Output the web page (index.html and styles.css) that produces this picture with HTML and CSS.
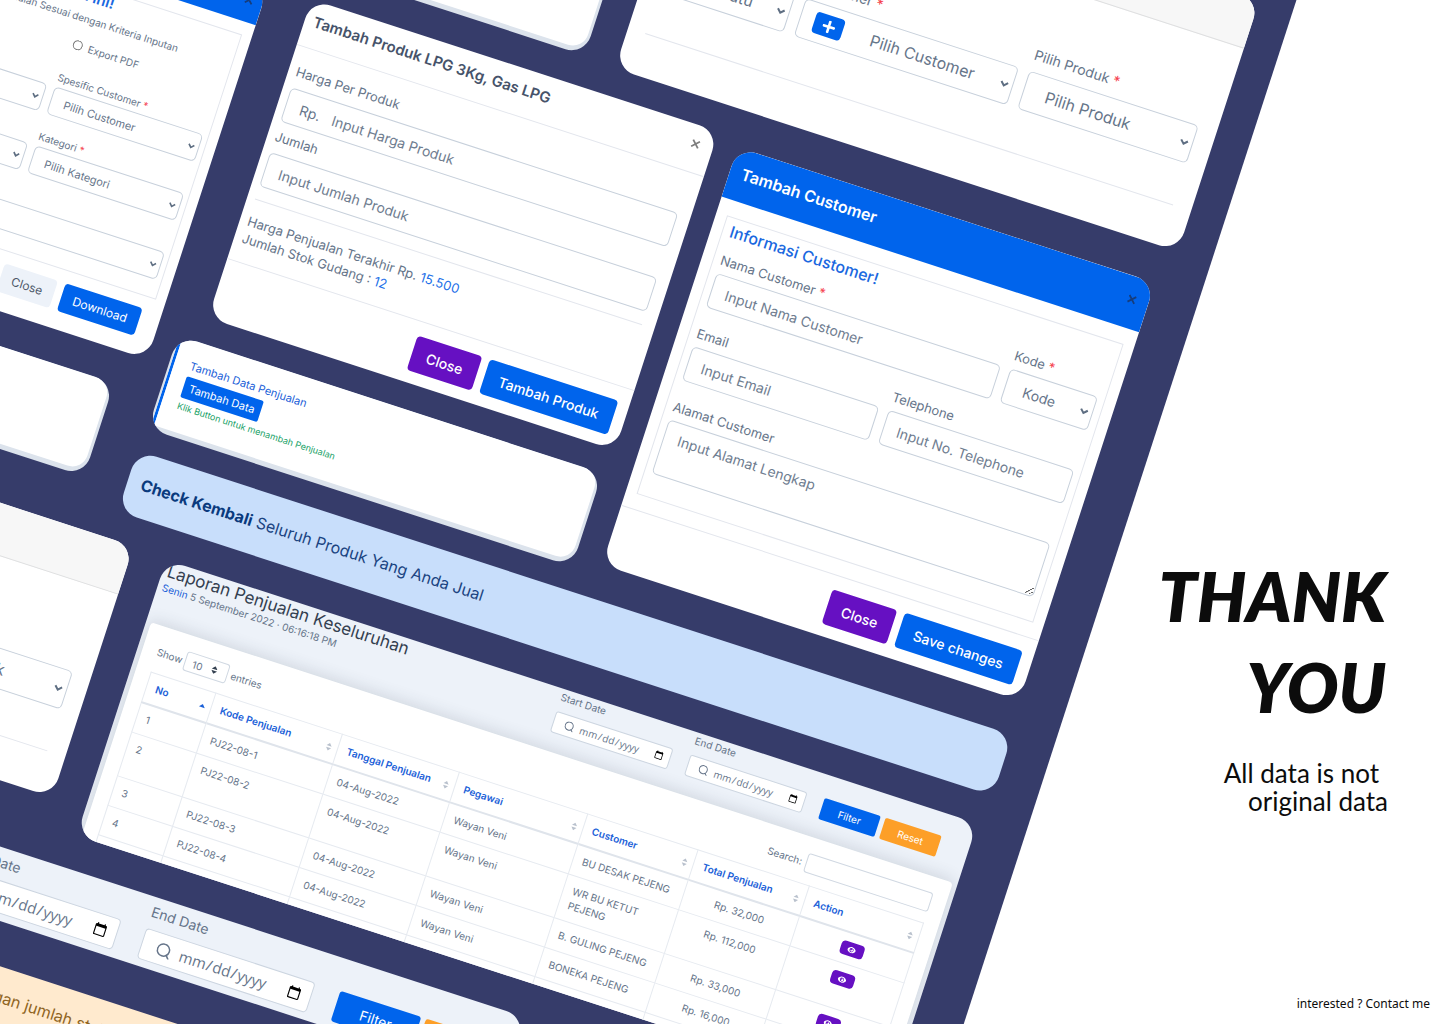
FILE: index.html
```html
<!DOCTYPE html>
<html lang="en-US">
<head>
<meta charset="utf-8">
<meta name="viewport" content="width=device-width, initial-scale=1">
<title>Thank you</title>
<link rel="stylesheet" href="styles.css">
</head>
<body>
<svg class="sprite" aria-hidden="true">
  <symbol id="icon-x" viewBox="0 0 10 10"><path d="M1.500 1.500l7 7M8.500 1.500l-7 7" fill="none" stroke="currentColor" stroke-width="1.800"/></symbol>
  <symbol id="icon-plus" viewBox="0 0 12 12"><path d="M6 1v10M1 6h10" fill="none" stroke="currentColor" stroke-width="2.400" stroke-linecap="round"/></symbol>
  <symbol id="icon-search" viewBox="0 0 16 16"><circle cx="7.500" cy="7.500" r="6.500" fill="none" stroke="currentColor" stroke-width="1.600"/><path d="M12 12l3 3.500" fill="none" stroke="currentColor" stroke-width="1.600" stroke-linecap="round"/></symbol>
  <symbol id="icon-sort" viewBox="0 0 8 10"><path d="M4 0.500L7 4H1zM4 9.500L1 6h6z" fill="currentColor"/></symbol>
  <symbol id="icon-up" viewBox="0 0 8 10"><path d="M4 3L7.500 7h-7z" fill="currentColor"/></symbol>
  <symbol id="icon-eye" viewBox="0 0 16 12"><path d="M8 0.500C4.300 0.500 1.500 2.900 0.200 6c1.300 3.100 4.100 5.500 7.800 5.500s6.500-2.400 7.800-5.500C14.500 2.900 11.700 0.500 8 0.500z" fill="currentColor"/><circle cx="8" cy="6" r="3.700" fill="#6610c2"/><circle cx="8.300" cy="6.300" r="2.300" fill="currentColor"/><circle cx="7" cy="5" r="1.300" fill="#6610c2"/></symbol>
</svg>

<main class="page">
  <div class="board">

    <section class="card notice notice-top" aria-label="Tambah data penjualan">
      <div class="notice-body">
        <p class="notice-title">Tambah Data Penjualan</p>
        <button class="btn btn-blue btn-tiny" type="button">Tambah Data</button>
        <p class="notice-hint">Klik Button untuk menambah Penjualan</p>
      </div>
    </section>

    <section class="card order order-top">
      <div class="order-head"></div>
      <form class="order-body">
        <div class="order-grid">
          <div class="field"><label for="jenis-a">Pilih Jenis</label>
            <select id="jenis-a"><option>Pilih Satu</option></select></div>
          <div class="field"><label for="cust-a">Customer <span class="req">*</span></label>
            <div class="combo">
              <button class="btn btn-blue btn-plus" type="button" aria-label="Tambah customer"><svg><use href="#icon-plus"/></svg></button>
              <select id="cust-a"><option>Pilih Customer</option></select>
            </div></div>
          <div class="field"><label for="prod-a">Pilih Produk <span class="req">*</span></label>
            <select id="prod-a"><option>Pilih Produk</option></select></div>
        </div>
        <hr>
      </form>
    </section>

    <section class="card export">
      <header class="modal-head modal-head-blue"><h2>Export</h2>
        <button class="close" type="button" aria-label="Tutup"><svg><use href="#icon-x"/></svg></button></header>
      <form class="export-box">
        <h3>Download Laporan Hari ini!</h3>
        <p>Unduh Laporan Penjualan Sesuai dengan Kriteria Inputan</p>
        <div class="export-grid">
          <label class="radio"><input type="radio" name="format">Export Excel</label>
          <label class="radio"><input type="radio" name="format">Export PDF</label>
          <div class="field"><label for="pegawai">Spesific Pegawai</label>
            <select id="pegawai"><option>Pilih Pegawai</option></select></div>
          <div class="field"><label for="spcust">Spesific Customer <span class="req">*</span></label>
            <select id="spcust"><option>Pilih Customer</option></select></div>
          <div class="field"><label for="produk">Produk</label>
            <select id="produk"><option>Pilih Produk</option></select></div>
          <div class="field"><label for="kategori">Kategori <span class="req">*</span></label>
            <select id="kategori"><option>Pilih Kategori</option></select></div>
          <div class="field wide"><label for="bulan">Bulan</label>
            <select id="bulan"><option>Pilih Bulan</option></select></div>
        </div>
      </form>
      <footer class="modal-foot">
        <button class="btn btn-light" type="button">Close</button>
        <button class="btn btn-blue" type="button">Download</button>
      </footer>
    </section>

    <section class="card product">
      <header class="modal-head"><h2>Tambah Produk LPG 3Kg, Gas LPG</h2>
        <button class="close" type="button" aria-label="Tutup"><svg><use href="#icon-x"/></svg></button></header>
      <form class="product-body">
        <div class="field"><label for="harga">Harga Per Produk</label>
          <div class="group"><span>Rp.</span><input id="harga" type="text" placeholder="Input Harga Produk"></div></div>
        <div class="field"><label for="jumlah">Jumlah</label>
          <input id="jumlah" type="text" placeholder="Input Jumlah Produk"></div>
        <hr>
        <p>Harga Penjualan Terakhir Rp. <span class="value">15.500</span></p>
        <p>Jumlah Stok Gudang : <span class="value">12</span></p>
      </form>
      <footer class="modal-foot">
        <button class="btn btn-purple" type="button">Close</button>
        <button class="btn btn-blue" type="button">Tambah Produk</button>
      </footer>
    </section>

    <section class="card customer">
      <header class="modal-head modal-head-blue"><h2>Tambah Customer</h2>
        <button class="close" type="button" aria-label="Tutup"><svg><use href="#icon-x"/></svg></button></header>
      <form class="customer-box">
        <h3>Informasi Customer!</h3>
        <div class="customer-rows">
          <div class="row">
            <div class="field grow"><label for="nama">Nama Customer <span class="req">*</span></label>
              <input id="nama" type="text" placeholder="Input Nama Customer"></div>
            <div class="field code"><label for="kode">Kode <span class="req">*</span></label>
              <select id="kode"><option>Kode</option></select></div>
          </div>
          <div class="row">
            <div class="field grow"><label for="email">Email</label>
              <input id="email" type="email" placeholder="Input Email"></div>
            <div class="field grow"><label for="telp">Telephone</label>
              <input id="telp" type="tel" placeholder="Input No. Telephone"></div>
          </div>
          <div class="field"><label for="alamat">Alamat Customer</label>
            <textarea id="alamat" placeholder="Input Alamat Lengkap"></textarea></div>
        </div>
      </form>
      <footer class="modal-foot">
        <button class="btn btn-purple" type="button">Close</button>
        <button class="btn btn-blue" type="button">Save changes</button>
      </footer>
    </section>

    <section class="card notice notice-mid">
      <div class="notice-body">
        <p class="notice-title">Tambah Data Penjualan</p>
        <button class="btn btn-blue btn-tiny" type="button">Tambah Data</button>
        <p class="notice-hint">Klik Button untuk menambah Penjualan</p>
      </div>
    </section>

    <section class="card notice notice-left">
      <div class="notice-body">
        <p class="notice-title">Tambah Data Penjualan</p>
        <button class="btn btn-blue btn-tiny" type="button">Tambah Data</button>
        <p class="notice-hint">Klik Button untuk menambah Penjualan</p>
      </div>
    </section>

    <p class="card alert alert-info"><strong>Check Kembali</strong> Seluruh Produk Yang Anda Jual</p>

    <section class="card order order-left">
      <div class="order-head"></div>
      <form class="order-body">
        <div class="order-grid">
          <div class="field"><label for="jenis-b">Pilih Jenis</label>
            <select id="jenis-b"><option>Pilih Satu</option></select></div>
          <div class="field"><label for="cust-b">Customer <span class="req">*</span></label>
            <div class="combo">
              <button class="btn btn-blue btn-plus" type="button" aria-label="Tambah customer"><svg><use href="#icon-plus"/></svg></button>
              <select id="cust-b"><option>Pilih Customer</option></select>
            </div></div>
          <div class="field"><label for="prod-b">Pilih Produk <span class="req">*</span></label>
            <select id="prod-b"><option>Pilih Produk</option></select></div>
        </div>
        <hr>
      </form>
    </section>

    <section class="card report">
      <header class="report-head">
        <div>
          <h2>Laporan Penjualan Keseluruhan</h2>
          <p><span>Senin</span> 5 September 2022 · 06:16:18 PM</p>
        </div>
        <form class="filters">
          <div class="date"><label for="start-a">Start Date</label>
            <div class="date-box"><svg><use href="#icon-search"/></svg><input id="start-a" type="date"></div></div>
          <div class="date"><label for="end-a">End Date</label>
            <div class="date-box"><svg><use href="#icon-search"/></svg><input id="end-a" type="date"></div></div>
          <div class="filter-buttons">
            <button class="btn btn-blue" type="button">Filter</button>
            <button class="btn btn-orange" type="reset">Reset</button>
          </div>
        </form>
      </header>
      <div class="panel">
        <div class="panel-tools">
          <label class="show">Show
            <select><option>10</option></select> entries</label>
          <label class="search">Search: <input type="search"></label>
        </div>
        <table>
          <colgroup><col class="c-no"><col class="c-kode"><col class="c-tgl"><col class="c-peg"><col class="c-cust"><col class="c-total"><col class="c-act"></colgroup>
          <thead><tr>
            <th><div>No<svg class="sorted"><use href="#icon-up"/></svg></div></th>
            <th><div>Kode Penjualan<svg><use href="#icon-sort"/></svg></div></th>
            <th><div>Tanggal Penjualan<svg><use href="#icon-sort"/></svg></div></th>
            <th><div>Pegawai<svg><use href="#icon-sort"/></svg></div></th>
            <th><div>Customer<svg><use href="#icon-sort"/></svg></div></th>
            <th><div>Total Penjualan<svg><use href="#icon-sort"/></svg></div></th>
            <th><div>Action<svg><use href="#icon-sort"/></svg></div></th>
          </tr></thead>
          <tbody>
            <tr><td>1</td><td>PJ22-08-1</td><td>04-Aug-2022</td><td>Wayan Veni</td><td>BU DESAK PEJENG</td><td class="mid">Rp. 32,000</td><td class="mid"><button class="btn btn-purple btn-eye" type="button" aria-label="Lihat"><svg><use href="#icon-eye"/></svg></button></td></tr>
            <tr><td>2</td><td>PJ22-08-2</td><td>04-Aug-2022</td><td>Wayan Veni</td><td>WR BU KETUT PEJENG</td><td class="mid">Rp. 112,000</td><td class="mid"><button class="btn btn-purple btn-eye" type="button" aria-label="Lihat"><svg><use href="#icon-eye"/></svg></button></td></tr>
            <tr><td>3</td><td>PJ22-08-3</td><td>04-Aug-2022</td><td>Wayan Veni</td><td>B. GULING PEJENG</td><td class="mid">Rp. 33,000</td><td class="mid"><button class="btn btn-purple btn-eye" type="button" aria-label="Lihat"><svg><use href="#icon-eye"/></svg></button></td></tr>
            <tr><td>4</td><td>PJ22-08-4</td><td>04-Aug-2022</td><td>Wayan Veni</td><td>BONEKA PEJENG</td><td class="mid">Rp. 16,000</td><td class="mid"><button class="btn btn-purple btn-eye" type="button" aria-label="Lihat"><svg><use href="#icon-eye"/></svg></button></td></tr>
            <tr class="last"><td></td><td></td><td></td><td></td><td></td><td></td><td></td></tr>
          </tbody>
        </table>
      </div>
    </section>

    <section class="card dates">
      <form class="filters">
        <div class="date"><label for="start-b">Start Date</label>
          <div class="date-box"><svg><use href="#icon-search"/></svg><input id="start-b" type="date"></div></div>
        <div class="date"><label for="end-b">End Date</label>
          <div class="date-box"><svg><use href="#icon-search"/></svg><input id="end-b" type="date"></div></div>
        <div class="filter-buttons">
          <button class="btn btn-blue" type="button">Filter</button>
          <button class="btn btn-orange" type="reset">Reset</button>
        </div>
      </form>
    </section>

    <p class="card alert alert-warning">Perhatikan kembali dengan jumlah stok</p>
  </div>

  <div class="closing">
    <h1>THANK<br>YOU</h1>
    <p class="remark"><span>All data is not</span>original data</p>
  </div>
  <p class="contact">interested ? Contact me</p>
</main>
</body>
</html>
```
FILE: styles.css
```css
* { box-sizing: border-box; margin: 0; }

body {
  font-family: Inter, "Liberation Sans", sans-serif;
  font-size: 14px;
  color: #66758a;
  background: #fff;
}

button, input, select, textarea { font: inherit; color: inherit; }

.sprite { display: none; }

.page {
  position: relative;
  min-height: 100vh;
  overflow: hidden;
  display: flex;
  flex-direction: column;
  align-items: flex-end;
}

/* Tilted collage: cards are pinned at their own spots on the board */
.board {
  position: absolute;
  left: -300px;
  top: -460px;
  width: 1533px;
  height: 1480px;
  background: #363c6a;
  transform: rotate(18deg);
  transform-origin: 300px 460px;
}

.card {
  position: absolute;
  overflow: hidden;
  border-radius: 20px;
  background: #fff;
}

.notice-top { left: 427px; top: 234px; }
.notice-mid { left: 573px; top: 724px; }
.notice-left { left: 81px; top: 789px; }
.order-top { left: 906px; top: 71px; }
.order-left { left: 4px; top: 938px; }
.export { left: 199px; top: 367px; width: 352px; }
.product { left: 596px; top: 363px; width: 428px; }
.customer { left: 1047px; top: 372px; width: 439px; }
.alert-info { left: 570px; top: 846px; }
.alert-warning { left: 411px; top: 1379px; }
.report { left: 631px; top: 941px; width: 853px; height: 290px; }
.dates { left: 260px; top: 1265px; width: 854px; }

/* Shared controls */
.btn {
  border: 0;
  padding: 0;
  border-radius: 4px;
  color: #fff;
  cursor: pointer;
}
.btn-blue { background: #0064ec; }
.btn-purple { background: #6610c2; }
.btn-orange { background: #fd9f28; }
.btn-light { background: #edf2f9; color: #4d5969; }

.field { display: flex; flex-direction: column; min-width: 0; }
.field label { font-size: 13px; line-height: 18px; }
.req { color: #f5424f; }

.field input, .field select, .field textarea, .group {
  width: 100%;
  height: 36px;
  padding: 0 14px;
  border: 1px solid #c7d0db;
  border-radius: 5px;
  background: #fff;
}
.field select {
  appearance: none;
  padding: 0 18px;
  background: #fff url("data:image/svg+xml,%3Csvg xmlns='http://www.w3.org/2000/svg' width='10' height='7'%3E%3Cpath d='M1.500 1.500L5 5l3.500-3.500' fill='none' stroke='%235e6e82' stroke-width='2'/%3E%3C/svg%3E") no-repeat right 3px center;
}
.field input::placeholder, .field textarea::placeholder { color: #6f7d90; opacity: 1; }

hr { border: 0; border-top: 1px solid #e3e6ed; }

/* Modal parts */
.modal-head {
  display: flex;
  justify-content: space-between;
  padding: 9px 13px 14px 9px;
  border-bottom: 1px solid #e3e6ed;
}
.modal-head h2 { font-size: 15px; line-height: 24px; font-weight: 600; color: #46536a; }
.modal-head-blue { padding: 12px 12px 16px; background: #0064ec; border: 0; }
.modal-head-blue h2 { font-size: 16px; color: #fff; }
.close { display: flex; align-self: flex-start; margin-top: 5px; border: 0; padding: 0; background: none; color: #7d7d7d; }
.close svg { width: 10px; height: 10px; }
.modal-head-blue .close { margin-top: 6px; color: #163d7c; }
.modal-foot {
  display: flex;
  justify-content: flex-end;
  gap: 8px;
  padding: 14px 12px 12px;
  border-top: 1px solid #e3e6ed;
}
.modal-foot .btn { height: 36px; padding: 0 15px; font-weight: 500; }

/* Product modal */
.product-body { padding: 16px 13px 15px 8px; }
.product-body .field { gap: 8px; margin-bottom: 6px; }
.product-body .group { display: flex; align-items: center; }
.product-body .group span { width: 34px; }
.product-body .group input { flex: 1; width: auto; height: 30px; border: 0; padding: 0; }
.product-body hr { margin: 13px 0; }
.product-body p { font-size: 13px; line-height: 18px; }
.value { color: #1b6fe8; }

/* Customer modal */
.customer-box {
  margin: 16px 11px 15px;
  padding: 2px 7px 23px;
  border: 1px solid #e3e6ed;
}
.customer-box h3 { margin-bottom: 10px; font-size: 16px; line-height: 22px; font-weight: 500; color: #1a68e0; }
.customer-rows { display: flex; flex-direction: column; gap: 18px; }
.customer-box .field { gap: 5px; }
.row { display: flex; gap: 10px; }
.grow { flex: 1; }
.code { width: 92px; }
.field textarea { height: 57px; padding: 8px 14px; resize: vertical; display: block; }

/* Order form */
.order { width: 592px; }
.order-head { height: 51px; background: #f7f7f7; border-bottom: 1px solid #dedfe0; }
.order-body { padding: 61px 19px 42px 18px; }
.order-body .field { gap: 8px; font-size: 16px; }
.order-body .field label { font-size: 14px; }
.order-body select { height: 40px; padding: 0 22px; }
.order-grid { display: grid; grid-template-columns: 131px 1fr 178px; gap: 11px; }
.order-body hr { margin-top: 43px; }
.combo { position: relative; }
.order-body .combo select { padding-left: 73px; }
.btn-plus {
  position: absolute;
  left: 15px;
  top: 9px;
  width: 30px;
  height: 22px;
  display: flex;
  align-items: center;
  justify-content: center;
}
.btn-plus svg { width: 13px; height: 13px; }

/* Export modal */
.export { font-size: 11px; }
.export .modal-head { padding: 10px 9px 10px 14px; }
.export .modal-head h2 { font-size: 13px; line-height: 18px; }
.export .close { margin-top: 1px; }
.export-box { margin: 13px 10px 12px; padding: 1px 5px 18px; border: 1px solid #e3e6ed; }
.export-box h3 { font-size: 15px; line-height: 18px; font-weight: 600; color: #1a68e0; }
.export-box p { margin: 6px 0 14px; font-size: 10px; line-height: 14px; }
.export-grid { display: grid; grid-template-columns: 1fr 1fr; column-gap: 8px; row-gap: 16px; }
.radio { display: flex; align-items: center; gap: 6px; margin: 0 0 6px 4px; font-size: 10px; line-height: 14px; }
.radio input { width: 10px; height: 10px; margin: 0; }
.export .field { gap: 3px; }
.export .field label { font-size: 10px; line-height: 14px; }
.export .field select { height: 29px; padding: 0 13px; background-size: 8px; }
.export .wide { grid-column: span 2; }
.export .modal-foot { padding: 0 20px 18px; border: 0; }
.export .modal-foot .btn { height: 29px; padding: 0 12px; font-size: 12px; font-weight: 400; }

/* Small notice */
.notice { width: 446px; padding: 0 3px 5px 2px; background: #dce3ec; }
.notice-body {
  display: flex;
  flex-direction: column;
  align-items: flex-start;
  padding: 17px 0 19px 16px;
  border-left: 3px solid #0064ec;
  border-radius: 0 16px 16px 0;
  background: #fff;
}
.notice-title { margin-bottom: 3px; font-size: 11px; line-height: 16px; color: #1a60d8; }
.notice-hint { margin-top: 2px; font-size: 9px; line-height: 14px; color: #17a166; }
.btn-tiny { height: 22px; padding: 0 6px; border-radius: 2px; font-size: 11px; }

/* Alerts */
.alert { width: 920px; padding: 19px 14px 21px; font-size: 16px; line-height: 24px; }
.alert-info { background: #c8defb; color: #1b4481; }
.alert-info strong { color: #0a3a7d; }
.alert-warning { padding-top: 17px; background: #ffeace; color: #8f651f; }

/* Date filters */
.filters { display: flex; align-items: flex-end; gap: 18px; font-size: 10px; }
.date { display: flex; flex-direction: column; gap: 8px; }
.date label { line-height: 14px; }
.date-box {
  display: flex;
  align-items: center;
  gap: 5px;
  width: 123px;
  height: 22px;
  padding: 0 6px 0 11px;
  border: 1px solid #ccd5e0;
  border-radius: 3px;
  background: #fff;
}
.date-box svg { flex: none; width: 10px; height: 10px; }
.date-box input {
  flex: 1;
  min-width: 0;
  border: 0;
  padding: 0;
  background: none;
  font-family: "Open Sans", sans-serif;
}
.date-box input::-webkit-calendar-picker-indicator { margin: 0; padding: 0; }
.filter-buttons { display: flex; gap: 5px; }
.filter-buttons .btn { width: 59px; height: 22px; border-radius: 2px; }

/* Larger copy of the date bar */
.dates { padding: 6px 9px 7px; background: #edf2f9; }
.dates .filters { justify-content: flex-end; gap: 26px; font-size: 14px; }
.dates .date label { line-height: 18px; }
.dates .date-box { width: 178px; height: 32px; padding: 0 9px 0 15px; gap: 8px; border-radius: 4px; font-size: 15px; }
.dates .date-box svg { width: 15px; height: 15px; }
.dates .filter-buttons .btn { width: 85px; height: 32px; border-radius: 3px; }

/* Report */
.report { background: #edf2f9; font-size: 10px; }
.report-head { display: flex; justify-content: space-between; padding: 0 30px 19px 5px; }
.report-head h2 { font-size: 17px; line-height: 20px; font-weight: 400; color: #344050; }
.report-head p { line-height: 14px; }
.report-head p span { color: #1a60d8; }
.report-head .filters { padding-top: 1px; }
.panel {
  margin: 0 5px;
  padding: 16px 15px;
  border-radius: 4px 4px 0 0;
  background: #fff;
  box-shadow: 0 0 16px 2px rgba(52, 64, 80, .16);
}
.panel-tools { display: flex; justify-content: space-between; margin-bottom: 11px; line-height: 20px; }
.panel-tools label { display: flex; gap: 4px; }
.panel-tools .show { gap: 3px; }
.panel-tools select, .panel-tools input {
  height: 20px;
  border: 1px solid #d0d8e2;
  border-radius: 3px;
  background: #fff;
}
.panel-tools select {
  width: 45px;
  padding: 0 7px;
  appearance: none;
  background: #fff url("data:image/svg+xml,%3Csvg xmlns='http://www.w3.org/2000/svg' width='6' height='8'%3E%3Cpath d='M3 0l3 3.300H0zM3 8L0 4.700h6z' fill='%23344050'/%3E%3C/svg%3E") no-repeat right 10px center;
}
.panel-tools input { width: 131px; }

table { width: 100%; table-layout: fixed; border-collapse: collapse; line-height: 15px; }
.c-no { width: 68px; }
.c-kode { width: 133px; }
.c-tgl { width: 123px; }
.c-peg { width: 135px; }
.c-cust { width: 116px; }
.c-total { width: 117px; }
th, td { padding: 7px 9px 8px; border: 1px solid #e6eaf0; text-align: left; vertical-align: top; }
th { border-bottom: 2px solid #dfe4eb; font-weight: 600; color: #1a60d8; white-space: nowrap; }
th div { display: flex; justify-content: space-between; margin-right: -4px; }
th svg { width: 7px; height: 9px; margin-top: 4px; color: #b9c1cd; }
th .sorted { color: #1a60d8; }
.mid { text-align: center; }
.last td { height: 32px; }
.btn-eye { display: block; width: 24px; height: 14px; margin: 1px auto 0; }
.btn-eye svg { display: block; width: 9px; height: 7px; margin: 0 auto; }

/* Closing words */
.closing { margin: auto 52px 209px 0; padding-top: 200px; text-align: right; color: #0c0c0c; }
.closing h1 { padding-right: 2px; font-family: Lato, sans-serif; font-size: 68px; line-height: 91px; font-weight: 800; font-style: italic; }
.remark { margin-top: 27px; font-family: Lato, sans-serif; font-size: 26px; line-height: 28px; }
.remark span { display: block; padding-right: 9px; }
.contact {
  position: absolute;
  right: 10px;
  bottom: 12px;
  font-family: "Noto Sans", sans-serif;
  font-size: 12px;
  line-height: 16px;
  color: #0c0c0c;
}
```
